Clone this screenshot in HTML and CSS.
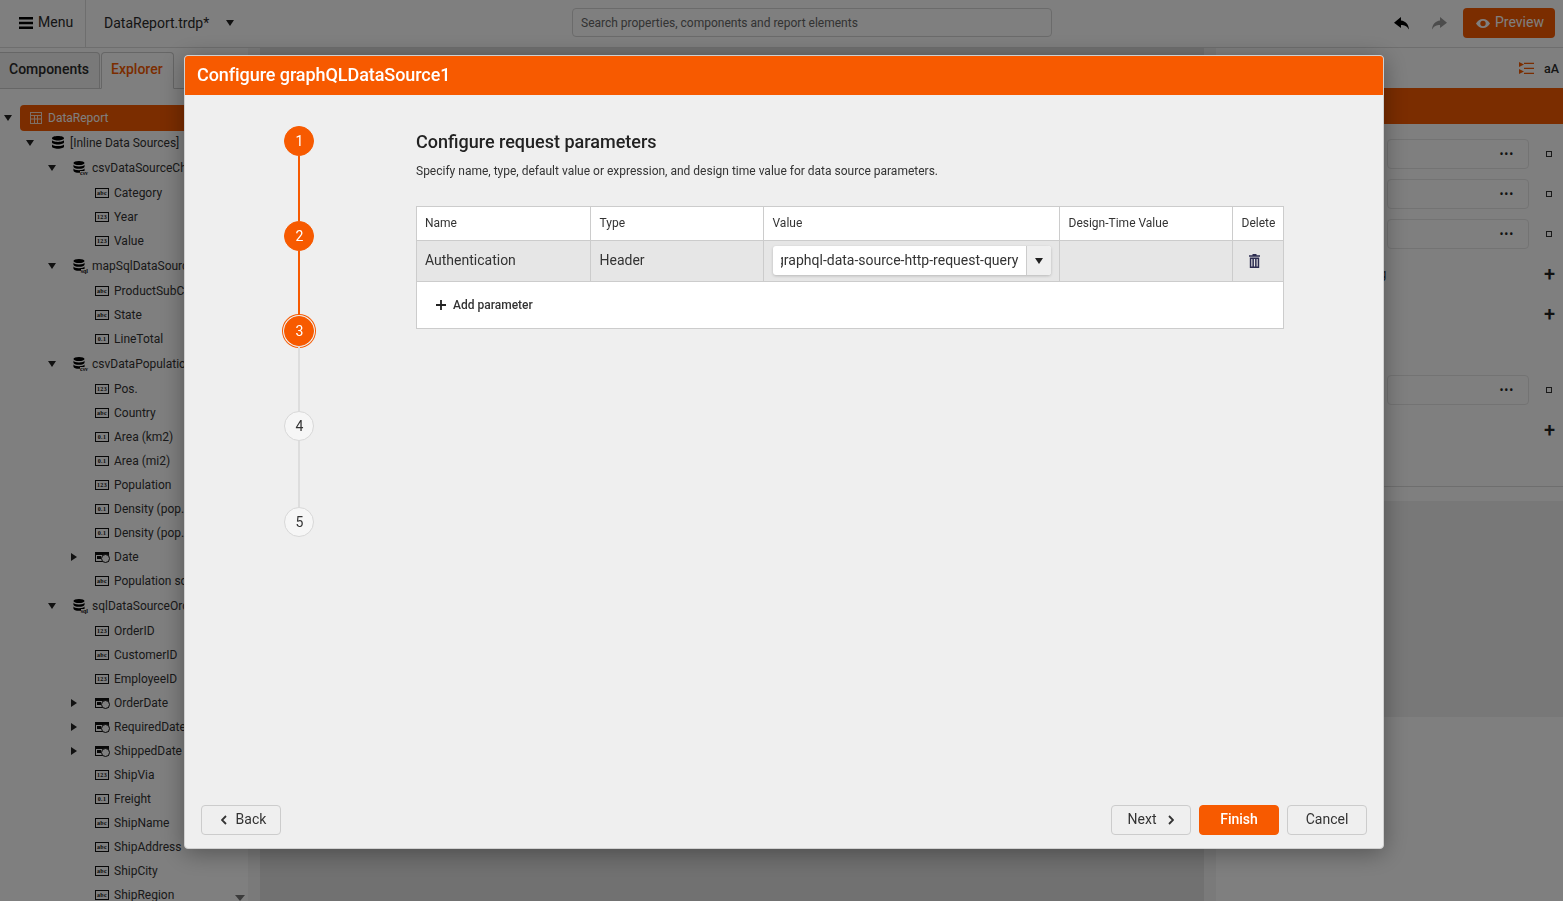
FILE: index.html
```html
<!DOCTYPE html>
<html>
<head>
    <title>Report Designer</title>
    <meta name="viewport" content="width=device-width, initial-scale=1.0">
    <link rel="stylesheet" href="styles.css">
</head>
<body>
    <svg class="defs" width="0" height="0">
        <symbol id="db" viewBox="0 0 12 13">
            <path d="M6 0C2.7 0 0 .9 0 2.2S2.7 4.4 6 4.4 12 3.500 12 2.200 9.300 0 6 0zM0 3.800V6.200C0 7.500 2.700 8.400 6 8.400S12 7.500 12 6.200V3.800C12 5.100 9.300 5.900 6 5.900S0 5.100 0 3.800zM0 7.900V10.600C0 11.900 2.700 12.800 6 12.800S12 11.900 12 10.600V7.900C12 9.200 9.300 10 6 10S0 9.200 0 7.900z"/>
        </symbol>
    </svg>

    <div class="app">
        <header class="toolbar">
            <div class="menu">
                <svg class="hamburger" viewBox="0 0 14 12"><path d="M0 0h14v2.500H0zM0 4.700h14v2.500H0zM0 9.400h14v2.500H0z"/></svg>
                <span>Menu</span>
            </div>
            <div class="file">
                <span>DataReport.trdp*</span>
                <i class="tri-down"></i>
            </div>
            <div class="search">Search properties, components and report elements</div>
            <div class="actions">
                <svg class="undo" viewBox="0 0 14 12"><path d="M6.500 0L0 5.200l6.500 5V7.300c3.200 0 5.500.8 7.500 4.400C13.700 7 10.800 3.600 6.500 3.200z"/></svg>
                <svg class="redo" viewBox="0 0 14 12"><path d="M7.500 0L14 5.200l-6.500 5V7.300c-3.200 0-5.500.8-7.500 4.400C.3 7 3.200 3.600 7.500 3.200z"/></svg>
                <div class="preview">
                    <svg class="eye" viewBox="0 0 14 9"><path fill-rule="evenodd" d="M7 0c3 0 5.500 1.800 7 4.500C12.500 7.200 10 9 7 9S1.500 7.200 0 4.500C1.500 1.800 4 0 7 0zm0 1.800a2.700 2.700 0 1 0 0 5.400 2.700 2.700 0 0 0 0-5.400z"/></svg>
                    <span>Preview</span>
                </div>
            </div>
        </header>

        <main class="workspace">
            <aside class="left-panel">
                <div class="tabs">
                    <div class="tab">Components</div>
                    <div class="tab active">Explorer</div>
                </div>
                <div class="tree-wrap">
                    <div class="tree">
                        <div class="row tall lv0"><i class="tri-down"></i><div class="item selected"><svg class="ic-report" viewBox="0 0 12 12"><path d="M0 0h12v12H0zM1 1v2h10V1zM1 4v2.500h3V4zM5 4v2.500h2V4zM8 4v2.500h3V4zM1 7.500V11h3V7.500zM5 7.500V11h2V7.500zM8 7.500V11h3V7.500z" fill-rule="evenodd"/></svg><span>DataReport</span></div></div>
                        <div class="row lv1"><i class="tri-down"></i><div class="item"><svg class="ic-db"><use href="#db"/></svg><span>[Inline Data Sources]</span></div></div>
                        <div class="row tall lv2"><i class="tri-down"></i><div class="item"><span class="ds-icon"><svg><use href="#db"/></svg><b>csv</b></span><span>csvDataSourceChart</span></div></div>
                        <div class="row lv3"><i class="no-tri"></i><div class="item"><span class="ficon">abc</span><span>Category</span></div></div>
                        <div class="row lv3"><i class="no-tri"></i><div class="item"><span class="ficon">123</span><span>Year</span></div></div>
                        <div class="row lv3"><i class="no-tri"></i><div class="item"><span class="ficon">123</span><span>Value</span></div></div>
                        <div class="row tall lv2"><i class="tri-down"></i><div class="item"><span class="ds-icon"><svg><use href="#db"/></svg><b>sql</b></span><span>mapSqlDataSource</span></div></div>
                        <div class="row lv3"><i class="no-tri"></i><div class="item"><span class="ficon">abc</span><span>ProductSubCategory</span></div></div>
                        <div class="row lv3"><i class="no-tri"></i><div class="item"><span class="ficon">abc</span><span>State</span></div></div>
                        <div class="row lv3"><i class="no-tri"></i><div class="item"><span class="ficon">0.1</span><span>LineTotal</span></div></div>
                        <div class="row tall lv2"><i class="tri-down"></i><div class="item"><span class="ds-icon"><svg><use href="#db"/></svg><b>csv</b></span><span>csvDataPopulation</span></div></div>
                        <div class="row lv3"><i class="no-tri"></i><div class="item"><span class="ficon">123</span><span>Pos.</span></div></div>
                        <div class="row lv3"><i class="no-tri"></i><div class="item"><span class="ficon">abc</span><span>Country</span></div></div>
                        <div class="row lv3"><i class="no-tri"></i><div class="item"><span class="ficon">0.1</span><span>Area (km2)</span></div></div>
                        <div class="row lv3"><i class="no-tri"></i><div class="item"><span class="ficon">0.1</span><span>Area (mi2)</span></div></div>
                        <div class="row lv3"><i class="no-tri"></i><div class="item"><span class="ficon">123</span><span>Population</span></div></div>
                        <div class="row lv3"><i class="no-tri"></i><div class="item"><span class="ficon">0.1</span><span>Density (pop./km2)</span></div></div>
                        <div class="row lv3"><i class="no-tri"></i><div class="item"><span class="ficon">0.1</span><span>Density (pop./mi2)</span></div></div>
                        <div class="row lv3"><i class="tri-right"></i><div class="item"><span class="ficon date"></span><span>Date</span></div></div>
                        <div class="row lv3"><i class="no-tri"></i><div class="item"><span class="ficon">abc</span><span>Population source</span></div></div>
                        <div class="row tall lv2"><i class="tri-down"></i><div class="item"><span class="ds-icon"><svg><use href="#db"/></svg><b>sql</b></span><span>sqlDataSourceOrders</span></div></div>
                        <div class="row lv3"><i class="no-tri"></i><div class="item"><span class="ficon">123</span><span>OrderID</span></div></div>
                        <div class="row lv3"><i class="no-tri"></i><div class="item"><span class="ficon">abc</span><span>CustomerID</span></div></div>
                        <div class="row lv3"><i class="no-tri"></i><div class="item"><span class="ficon">123</span><span>EmployeeID</span></div></div>
                        <div class="row lv3"><i class="tri-right"></i><div class="item"><span class="ficon date"></span><span>OrderDate</span></div></div>
                        <div class="row lv3"><i class="tri-right"></i><div class="item"><span class="ficon date"></span><span>RequiredDate</span></div></div>
                        <div class="row lv3"><i class="tri-right"></i><div class="item"><span class="ficon date"></span><span>ShippedDate</span></div></div>
                        <div class="row lv3"><i class="no-tri"></i><div class="item"><span class="ficon">123</span><span>ShipVia</span></div></div>
                        <div class="row lv3"><i class="no-tri"></i><div class="item"><span class="ficon">0.1</span><span>Freight</span></div></div>
                        <div class="row lv3"><i class="no-tri"></i><div class="item"><span class="ficon">abc</span><span>ShipName</span></div></div>
                        <div class="row lv3"><i class="no-tri"></i><div class="item"><span class="ficon">abc</span><span>ShipAddress</span></div></div>
                        <div class="row lv3"><i class="no-tri"></i><div class="item"><span class="ficon">abc</span><span>ShipCity</span></div></div>
                        <div class="row lv3"><i class="no-tri"></i><div class="item"><span class="ficon">abc</span><span>ShipRegion</span></div></div>
                    </div>
                    <div class="tree-scroll"><i class="tri-scroll"></i></div>
                </div>
            </aside>

            <div class="strip"></div>
            <div class="canvas"></div>
            <div class="strip"></div>

            <aside class="right-panel">
                <div class="right-tools">
                    <svg class="ic-cat" viewBox="0 0 15 13"><path d="M0 0l5 2.500L0 5zM0 7l5 2.500L0 12zM5 .7h10V2H5zM5 5.700h10V7H5zM5 10.700h10V12H5z"/></svg>
                    <span class="az">aA</span>
                </div>
                <div class="right-band"></div>
                <div class="props">
                    <div class="prop-row first"><div class="prop-input"><span class="dots">•••</span></div><i class="square"></i></div>
                    <div class="prop-row"><div class="prop-input"><span class="dots">•••</span></div><i class="square"></i></div>
                    <div class="prop-row"><div class="prop-input"><span class="dots">•••</span></div><i class="square"></i></div>
                    <div class="prop-add"><span class="prop-name">Data binding</span><span class="plus">+</span></div>
                    <div class="prop-add"><span class="plus">+</span></div>
                    <div class="prop-row later"><div class="prop-input"><span class="dots">•••</span></div><i class="square"></i></div>
                    <div class="prop-add last"><span class="plus">+</span></div>
                </div>
                <div class="prop-help"></div>
            </aside>
        </main>
    </div>

    <div class="dim"></div>

    <div class="dialog">
        <div class="dialog-title">Configure graphQLDataSource1</div>
        <div class="dialog-body">
            <div class="stepper">
                <div class="step done">1</div>
                <div class="link done"></div>
                <div class="step done">2</div>
                <div class="link done"></div>
                <div class="step done current">3</div>
                <div class="link"></div>
                <div class="step">4</div>
                <div class="link long"></div>
                <div class="step">5</div>
            </div>
            <div class="content">
                <h2>Configure request parameters</h2>
                <p>Specify name, type, default value or expression, and design time value for data source parameters.</p>
                <div class="params">
                    <table>
                        <thead>
                            <tr>
                                <th class="col-name">Name</th>
                                <th class="col-type">Type</th>
                                <th class="col-value">Value</th>
                                <th class="col-design">Design-Time Value</th>
                                <th class="col-delete">Delete</th>
                            </tr>
                        </thead>
                        <tbody>
                            <tr>
                                <td>Authentication</td>
                                <td>Header</td>
                                <td>
                                    <div class="combo">
                                        <div class="combo-text"><span>graphql-data-source-http-request-query</span></div>
                                        <div class="combo-btn"><i class="tri-down"></i></div>
                                    </div>
                                </td>
                                <td></td>
                                <td class="cell-delete">
                                    <svg class="trash" viewBox="0 0 11 14"><path fill-rule="evenodd" d="M3.500 0h4v1.200H11v1.600H0V1.200h3.500zM.8 3.600h9.400V14H.8zM2.300 5v7.600h1.100V5zM4.900 5v7.600h1.200V5zM7.600 5v7.600h1.100V5z"/></svg>
                                </td>
                            </tr>
                        </tbody>
                    </table>
                    <div class="add-param">
                        <svg class="add-plus" viewBox="0 0 10 10"><path d="M4.100 0h1.800v4.100H10v1.800H5.900V10H4.100V5.900H0V4.100h4.100z"/></svg>
                        <span>Add parameter</span>
                    </div>
                </div>
            </div>
        </div>
        <div class="dialog-footer">
            <button class="btn back"><svg class="chev" viewBox="0 0 6 10"><path d="M5 1L1 5l4 4"/></svg><span>Back</span></button>
            <div class="footer-right">
                <button class="btn next"><span>Next</span><svg class="chev" viewBox="0 0 6 10"><path d="M1 1l4 4-4 4"/></svg></button>
                <button class="btn primary">Finish</button>
                <button class="btn">Cancel</button>
            </div>
        </div>
    </div>
</body>
</html>
```

FILE: styles.css
```css
* {
    margin: 0;
    padding: 0;
    box-sizing: border-box;
}

html, body {
    height: 100%;
    overflow: hidden;
}

body {
    font-family: Roboto, "Liberation Sans", sans-serif;
    font-size: 12px;
    color: #2b2b2b;
    background: #fff;
}

.defs {
    position: absolute;
}

.app {
    height: 100vh;
    display: flex;
    flex-direction: column;
}

/* Toolbar */
.toolbar {
    height: 48px;
    flex: none;
    display: flex;
    align-items: center;
    padding-bottom: 1px;
    border-bottom: 1px solid #ddd;
    font-size: 14px;
}

.menu {
    width: 86px;
    height: 47px;
    display: flex;
    align-items: center;
    gap: 5px;
    padding: 0 0 1px 19px;
    border-right: 1px solid #ddd;
}

.menu span, .file span {
    margin-bottom: 1px;
}

.hamburger {
    width: 14px;
    height: 12px;
}

.file {
    width: 486px;
    display: flex;
    align-items: center;
    gap: 17px;
    padding-left: 18px;
}

.search {
    width: 480px;
    height: 29px;
    margin-bottom: 2px;
    padding: 0 8px;
    line-height: 29px;
    font-size: 12px;
    color: #666;
    border: 1px solid #d6d6d6;
    border-radius: 4px;
}

.actions {
    flex: 1;
    display: flex;
    align-items: center;
    justify-content: flex-end;
    padding-right: 8px;
}

.undo, .redo {
    width: 15px;
    height: 13px;
    margin-right: 23px;
}

.redo {
    fill: #999;
    margin-right: 16px;
}

.preview {
    width: 92px;
    height: 30px;
    display: flex;
    align-items: center;
    gap: 5px;
    padding: 0 0 2px 13px;
    background: #f75a00;
    color: #fff;
    border-radius: 4px;
}

.eye {
    width: 14px;
    height: 9px;
    fill: #fff;
    margin-top: 2px;
}

/* Panels */
.workspace {
    flex: 1;
    min-height: 0;
    display: flex;
    background: #fff;
}

.left-panel {
    width: 248px;
    flex: none;
    display: flex;
    flex-direction: column;
}

.tabs {
    height: 41px;
    flex: none;
    display: flex;
    align-items: flex-end;
    gap: 1px;
    padding-top: 4px;
    border-bottom: 1px solid #ccc;
}

.tab {
    height: 37px;
    padding: 0 9px;
    line-height: 32px;
    font-size: 14px;
    font-weight: 500;
    background: #f2f2f2;
    border: 1px solid #ccc;
    border-left: none;
    border-radius: 0 4px 0 0;
    margin-bottom: -1px;
}

.tab:first-child {
    width: 100px;
}

.tab.active {
    width: 73px;
    color: #f75a00;
    background: #fff;
    border-left: 1px solid #ccc;
    border-radius: 4px 4px 0 0;
    border-bottom-color: #fff;
}

.tree-wrap {
    flex: 1;
    min-height: 0;
    display: flex;
    overflow: hidden;
}

.tree {
    flex: 1;
    padding-top: 16px;
    overflow: hidden;
}

.tree-scroll {
    width: 16px;
    display: flex;
    flex-direction: column;
    justify-content: flex-end;
    align-items: center;
}

.tri-scroll {
    border-left: 5px solid transparent;
    border-right: 5px solid transparent;
    border-top: 6px solid #777;
    display: block;
}

.row {
    height: 24px;
    display: flex;
    align-items: center;
    white-space: nowrap;
}

.row.tall {
    height: 26px;
}

.row.lv1 {
    padding-bottom: 1px;
}

.lv1 { padding-left: 22px; }
.lv2 { padding-left: 44px; }
.lv3 { padding-left: 66px; }

.row > i {
    margin-left: 4px;
    margin-right: 8px;
}

.tri-down {
    display: block;
    width: 0;
    height: 0;
    border-left: 4px solid transparent;
    border-right: 4px solid transparent;
    border-top: 6px solid #222;
}

.tri-right {
    display: block;
    width: 0;
    height: 0;
    margin-left: 5px !important;
    margin-right: 9px !important;
    border-top: 4px solid transparent;
    border-bottom: 4px solid transparent;
    border-left: 6px solid #222;
}

.no-tri {
    display: block;
    width: 8px;
}

.item {
    flex: 1;
    height: 100%;
    display: flex;
    align-items: center;
    gap: 5px;
    padding-left: 9px;
    font-size: 12px;
    color: #333;
    border-radius: 4px;
}

.item.selected {
    background: #f75a00;
    color: #fff;
    gap: 6px;
    padding-left: 10px;
}

.ic-report {
    width: 12px;
    height: 12px;
    fill: #fff;
    opacity: .8;
}

.ic-db {
    width: 12px;
    height: 13px;
    margin-left: 1px;
    margin-right: 1px;
}

.ds-icon {
    width: 14px;
    height: 14px;
    display: block;
    position: relative;
}

.ds-icon svg {
    width: 12px;
    height: 12px;
    display: block;
}

.ds-icon b {
    position: absolute;
    right: -1px;
    bottom: -1px;
    font: bold 6px/5px "Liberation Serif", serif;
    background: #fff;
    color: #111;
}

.ficon {
    width: 14px;
    height: 10px;
    flex: none;
    border: 1px solid #111;
    font: bold 6px/8px "Liberation Serif", serif;
    letter-spacing: .3px;
    color: #111;
    text-align: center;
    overflow: hidden;
}

.ficon.date {
    position: relative;
    overflow: visible;
    border-top-width: 3px;
}

.ficon.date::before {
    content: "";
    position: absolute;
    left: 1px;
    top: 1px;
    width: 4px;
    height: 3px;
    background: #111;
}

.ficon.date::after {
    content: "";
    position: absolute;
    right: -2px;
    bottom: -2px;
    width: 7px;
    height: 7px;
    background: #fff;
    border: 1px solid #111;
    border-radius: 50%;
}

.strip {
    width: 12px;
    flex: none;
    background: #f4f4f4;
}

.canvas {
    flex: 1;
    background: #e2e2e2;
}

.right-panel {
    width: 347px;
    flex: none;
    display: flex;
    flex-direction: column;
}

.right-tools {
    height: 40px;
    flex: none;
    display: flex;
    align-items: center;
    justify-content: flex-end;
    gap: 10px;
    padding-right: 4px;
}

.ic-cat {
    width: 15px;
    height: 13px;
    fill: #f75a00;
}

.az {
    font-size: 12.5px;
    font-weight: 500;
}

.right-band {
    height: 36px;
    flex: none;
    background: #f75a00;
}

.props {
    height: 363px;
    flex: none;
    padding: 15px 0 0 3px;
    border-bottom: 1px solid #ddd;
}

.prop-row {
    height: 30px;
    margin: 10px 0 0 168px;
    display: flex;
    align-items: center;
}

.prop-row.first {
    margin-top: 0;
}

.prop-row.later {
    margin-top: 41px;
}

.prop-input {
    width: 142px;
    height: 30px;
    display: flex;
    align-items: center;
    justify-content: flex-end;
    padding-right: 14px;
    border: 1px solid #e6e6e6;
    border-radius: 4px;
}

.dots {
    font-size: 12px;
    letter-spacing: .8px;
    color: #222;
}

.square {
    width: 6px;
    height: 6px;
    margin-left: 17px;
    border: 1px solid #333;
}

.prop-add {
    height: 40px;
    display: flex;
    align-items: center;
    justify-content: flex-end;
    padding-right: 8px;
    position: relative;
}

.prop-add:nth-child(4) {
    margin-top: 5px;
}

.prop-add.last {
    margin-top: 5px;
}

.prop-name {
    position: absolute;
    left: 100px;
}

.plus {
    font-size: 20px;
    line-height: 20px;
    font-weight: 500;
    color: #222;
}

.prop-help {
    height: 14px;
    flex: none;
}

.prop-help::after {
    content: "";
    display: block;
    height: 216px;
    margin-top: 14px;
    background: #f0f0f0;
}

/* Modal */
.dim {
    position: fixed;
    inset: 0;
    background: rgba(0, 0, 0, .5);
}

.dialog {
    position: fixed;
    left: 184px;
    top: 55px;
    width: 1200px;
    height: 794px;
    display: flex;
    flex-direction: column;
    background: #efefef;
    border: 1px solid #d0d0d0;
    border-radius: 4px;
    box-shadow: 0 4px 24px rgba(0, 0, 0, .35);
}

.dialog-title {
    height: 39px;
    flex: none;
    padding-left: 12px;
    line-height: 38px;
    font-size: 18px;
    font-weight: 500;
    letter-spacing: -.07px;
    color: #fff;
    background: #f75a00;
    border-radius: 3px 3px 0 0;
}

.dialog-body {
    flex: 1;
    min-height: 0;
    display: flex;
}

.stepper {
    width: 228px;
    flex: none;
    display: flex;
    flex-direction: column;
    align-items: center;
    padding-top: 31px;
}

.step {
    width: 30px;
    height: 30px;
    flex: none;
    display: flex;
    align-items: center;
    justify-content: center;
    padding-left: 1px;
    font-size: 14px;
    color: #333;
    background: #f6f6f6;
    border: 1px solid #d8d8d8;
    border-radius: 50%;
}

.step.done {
    color: #fff;
    background: #f75a00;
    border-color: #f75a00;
}

.step.current {
    box-shadow: 0 0 0 1px #efefef, 0 0 0 2px #f75a00;
}

.link {
    width: 2px;
    height: 65px;
    flex: none;
    background: #ddd;
}

.link.long {
    height: 66px;
}

.link.done {
    background: #f75a00;
}

.content {
    flex: 1;
    padding: 36px 0 0 3px;
}

.content h2 {
    font-size: 18px;
    line-height: 21px;
    font-weight: 500;
    color: #222;
}

.content p {
    margin-top: 11px;
    font-size: 12px;
    line-height: 16px;
    color: #333;
}

.params {
    width: 868px;
    margin-top: 27px;
    background: #fff;
    border: 1px solid #ccc;
}

.params table {
    width: 866px;
    table-layout: fixed;
    border-collapse: collapse;
}

.params th {
    height: 33px;
    padding: 0 8px 0 9px;
    text-align: left;
    font-size: 12px;
    font-weight: 400;
    color: #333;
    border-right: 1px solid #ccc;
    border-bottom: 1px solid #ccc;
}

.params th:first-child, .params td:first-child {
    padding-left: 8px;
}

.params th:last-child, .params td:last-child {
    border-right: none;
}

.col-name { width: 173px; }
.col-type { width: 173px; }
.col-value { width: 296px; }
.col-design { width: 173px; }
.col-delete { width: 51px; }

.params td {
    height: 41px;
    padding: 0 8px 2px 9px;
    font-size: 14px;
    color: #333;
    background: #e6e6e6;
    border-right: 1px solid #ccc;
    border-bottom: 1px solid #ccc;
}

.combo {
    height: 29px;
    margin-top: 2px;
    display: flex;
    background: #fff;
    border-radius: 3px;
    box-shadow: 0 1px 3px rgba(0, 0, 0, .2);
}

.combo-text {
    width: 238px;
    flex: none;
    display: flex;
    justify-content: flex-end;
    align-items: center;
    overflow: hidden;
    margin: 0 7px 0 8px;
    white-space: nowrap;
}

.combo-text span {
    flex: none;
    margin-bottom: 1px;
}

.combo-btn {
    flex: 1;
    display: flex;
    align-items: center;
    justify-content: center;
    background: #efefef;
    border-left: 1px solid #ccc;
    border-radius: 0 3px 3px 0;
}

.cell-delete {
    padding: 0 !important;
    padding-left: 16px !important;
}

.trash {
    width: 11px;
    height: 14px;
    display: block;
    fill: #2c2c50;
}

.add-param {
    height: 46px;
    display: flex;
    align-items: center;
    gap: 7px;
    padding-left: 19px;
    font-size: 12px;
    font-weight: 500;
    color: #333;
}

.add-plus {
    width: 10px;
    height: 10px;
    fill: #222;
}

.dialog-footer {
    height: 59px;
    flex: none;
    display: flex;
    justify-content: space-between;
    padding: 16px 16px 0;
}

.footer-right {
    display: flex;
    gap: 8px;
}

.btn {
    width: 80px;
    height: 30px;
    display: flex;
    align-items: center;
    justify-content: center;
    padding-bottom: 2px;
    font-family: inherit;
    font-size: 14px;
    color: #333;
    background: #efefef;
    border: 1px solid #ccc;
    border-radius: 4px;
}

.btn.back {
    gap: 9px;
    padding-left: 5px;
}

.btn.next {
    gap: 12px;
}

.btn.primary {
    color: #fff;
    font-weight: 500;
    background: #f75a00;
    border-color: #f75a00;
}

.chev {
    width: 6px;
    height: 10px;
    fill: none;
    stroke: #333;
    stroke-width: 1.8;
    margin-top: 2px;
}
```
